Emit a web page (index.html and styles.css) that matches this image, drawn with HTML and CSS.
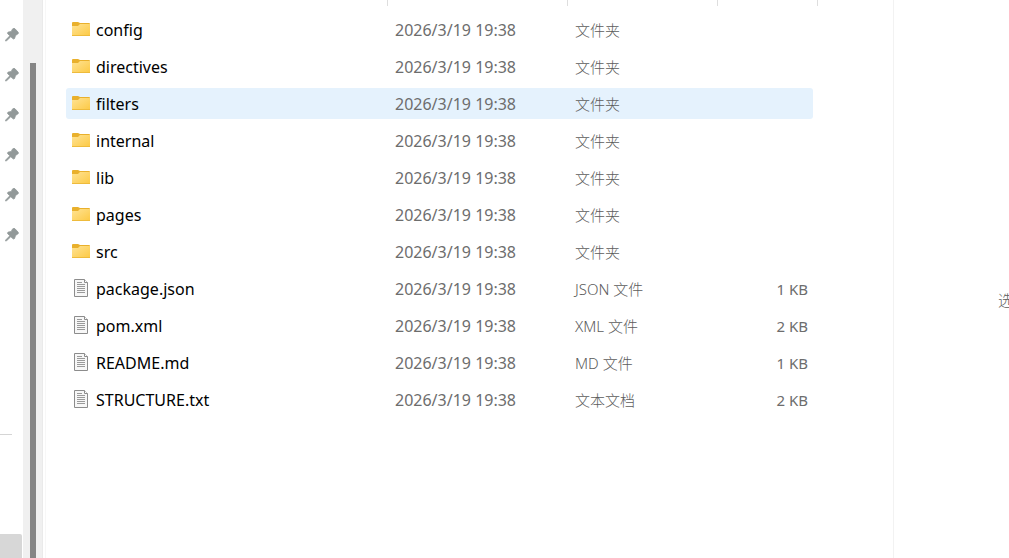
FILE: index.html
```html
<!DOCTYPE html>
<html lang="zh-CN">
<head>
<meta charset="utf-8">
<title>文件资源管理器</title>
<link rel="stylesheet" href="styles.css">
<script src="app.js" defer></script>
</head>
<body>
<svg class="defs" aria-hidden="true">
  <defs>
    <linearGradient id="front" x1="0" y1="0" x2="1" y2="1">
      <stop offset="0" stop-color="#ffe394"/>
      <stop offset="1" stop-color="#fcc944"/>
    </linearGradient>
  </defs>
  <symbol id="folder" viewBox="0 0 18 14">
    <path d="M0 1Q0 0 1 0H6L8 1H17Q18 1 18 2V8H0Z" fill="#e9b02c"/>
    <path d="M0 4H6L8 2H18V13Q18 14 17 14H1Q0 14 0 13Z" fill="url(#front)"/>
    <path d="M0 13.5H18" stroke="#eebb3c"/>
  </symbol>
  <symbol id="file" viewBox="0 0 14 18">
    <path d="M.5.5H10.5L13.5 3.5V17.5H.5Z" fill="#f7f7f7" stroke="#8c8c8c"/>
    <path d="M10.5.5V3.5H13.5" fill="#fff" stroke="#8c8c8c"/>
    <path d="M3 3.5H8M3 5.5H11M3 7.5H11M3 9.5H11M3 11.5H11M3 13.5H11" stroke="#9a9a9a"/>
  </symbol>
  <symbol id="pin" viewBox="0 0 14 14">
    <path d="M7.6.9Q8.9-.3 10 .8L13 4Q13.9 5.3 12.8 6L10.5 7.5L9.6 10.4Q8.9 11.6 7.8 10.6L5.8 8.7L1.8 12.6L.5 13L.9 11.8L4.8 7.8L2.8 5.8Q2 4.6 3.3 4.1L6.2 3.5Z" fill="#929999" stroke="#929999" stroke-width=".8"/>
  </symbol>
</svg>
<div class="explorer">
  <nav class="sidebar" aria-label="快速访问">
    <ul class="pins"></ul>
    <div class="divider"></div>
    <div class="selected"></div>
  </nav>
  <div class="scrollbar"><div class="thumb"></div></div>
  <main class="content">
    <table class="files">
      <colgroup><col class="c-name"><col class="c-date"><col class="c-type"><col class="c-size"></colgroup>
      <thead><tr><th></th><th></th><th></th><th></th></tr></thead>
      <tbody></tbody>
    </table>
  </main>
  <aside class="preview">选</aside>
</div>
</body>
</html>
```
FILE: styles.css
```css
* { box-sizing: border-box; }
body {
  margin: 0;
  background: #fff;
  color: #000;
  font: 15px/20px "Noto Sans", "Noto Sans CJK SC", sans-serif;
}
.defs { position: absolute; width: 0; height: 0; }
.explorer {
  display: grid;
  grid-template-columns: 23px 20px 1fr 116px;
  height: 100vh;
  overflow: hidden;
}
.sidebar { display: flex; flex-direction: column; }
.pins { list-style: none; margin: 0; padding: 15px 0 0; }
.pins li { height: 40px; }
.pin {
  display: flex;
  align-items: center;
  width: 23px;
  height: 40px;
  padding: 0 0 0 5px;
  border: 0;
  background: none;
}
.pin svg { width: 14px; height: 14px; }
.divider { width: 12px; height: 1px; margin-top: 179px; background: #d5d5d5; }
.selected { flex: 1; margin: 99px 1px 0 0; background: #d7d7d7; border-radius: 0 2px 0 0; }
.scrollbar { padding: 63px 6px 0 7px; background: #f0f0f0; border-right: 1px solid #eaeaea; }
.thumb { width: 6px; height: 100%; background: #858585; }
.content { margin-left: 2px; padding-left: 20px; border-left: 1px solid #f7f7f7; }
.files {
  width: 747px;
  margin-top: -6px;
  table-layout: fixed;
  border-collapse: separate;
  border-spacing: 0 6px;
}
.c-name { width: 322px; }
.c-date { width: 180px; }
.c-type { width: 150px; }
th { position: relative; height: 8px; padding: 0; }
th::after {
  content: "";
  position: absolute;
  top: 0;
  right: 0;
  width: 1px;
  height: 6px;
  background: #dedede;
}
th:last-child::after { right: -5px; }
td { height: 31px; padding: 0 0 0 7px; color: #6d6d6d; white-space: nowrap; }
.name { padding-left: 5px; color: #000; font-size: 16px; }
.date { font-size: 16px; }
.type { color: #5c5c5c; font-weight: 300; }
.label { display: flex; align-items: center; gap: 5px; }
.icon { display: flex; justify-content: center; width: 20px; height: 20px; }
.folder { width: 18px; height: 14px; margin-top: 2px; }
.file { width: 14px; height: 18px; }
.size { padding: 0 5px 0 0; text-align: right; }
.hover td { background: #e5f2fd; }
.hover td:first-child { border-radius: 3px 0 0 3px; }
.hover td:last-child { border-radius: 0 3px 3px 0; }
.preview {
  display: flex;
  align-items: center;
  padding: 42px 0 0 104px;
  border-left: 1px solid #f2f2f2;
  color: #5c5c5c;
  font-weight: 300;
  white-space: nowrap;
  overflow: hidden;
}
```
FILE: app.js
```js
const files = [
  ["folder", "config", "文件夹", ""],
  ["folder", "directives", "文件夹", ""],
  ["folder", "filters", "文件夹", ""],
  ["folder", "internal", "文件夹", ""],
  ["folder", "lib", "文件夹", ""],
  ["folder", "pages", "文件夹", ""],
  ["folder", "src", "文件夹", ""],
  ["file", "package.json", "JSON 文件", "1 KB"],
  ["file", "pom.xml", "XML 文件", "2 KB"],
  ["file", "README.md", "MD 文件", "1 KB"],
  ["file", "STRUCTURE.txt", "文本文档", "2 KB"]
];
document.querySelector(".files tbody").innerHTML = files.map(([icon, name, type, size]) => `
  <tr class="${name === "filters" ? "hover" : ""}">
    <td class="name"><div class="label"><span class="icon"><svg class="${icon}"><use href="#${icon}"/></svg></span>${name}</div></td>
    <td class="date">2026/3/19 19:38</td><td class="type">${type}</td><td class="size">${size}</td>
  </tr>`).join("");
document.querySelector(".pins").innerHTML =
  `<li><button class="pin" aria-label="取消固定"><svg><use href="#pin"/></svg></button></li>`.repeat(6);
```
